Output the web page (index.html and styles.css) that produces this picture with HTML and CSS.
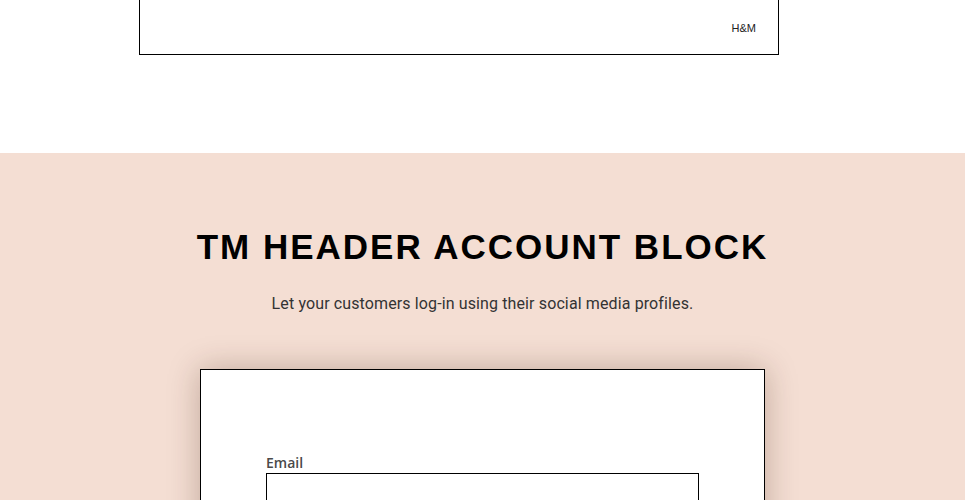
FILE: index.html
```html
<!DOCTYPE html>
<html lang="en">
<head>
<meta charset="utf-8">
<title>TM Header Account Block</title>
<link rel="stylesheet" href="styles.css">
</head>
<body>
  <div class="brand-box">
    <span class="brand">H&amp;M</span>
  </div>
  <section class="account-section">
    <h1 class="section-title">TM HEADER ACCOUNT BLOCK</h1>
    <p class="section-sub">Let your customers log-in using their social media profiles.</p>
    <div class="login-card">
      <label class="field-label" for="email">Email</label>
      <input class="field-input" id="email" type="email">
    </div>
  </section>
</body>
</html>
```
FILE: styles.css
```css
html, body {
  margin: 0;
  padding: 0;
  background: #ffffff;
}

body {
  font-family: "Liberation Sans", Arial, sans-serif;
  overflow: hidden;
}

.brand-box {
  box-sizing: border-box;
  width: 640px;
  height: 55px;
  margin-left: 139px;
  margin-bottom: 98px;
  border: 1px solid #000;
  border-top: 0;
  display: flex;
  justify-content: flex-end;
  align-items: flex-start;
  padding: 21px 22px 0 0;
}

.brand {
  font-family: "Liberation Sans", Arial, sans-serif;
  font-size: 11px;
  line-height: 14px;
  color: #222;
}

.account-section {
  background: #f4ded3;
  padding-top: 74px;
  min-height: 400px;
  display: flex;
  flex-direction: column;
  align-items: center;
}

.section-title {
  margin: 0;
  font-family: "Liberation Sans", Arial, sans-serif;
  font-weight: 700;
  font-size: 35px;
  line-height: 40px;
  letter-spacing: 2px;
  color: #000;
  text-align: center;
}

.section-sub {
  margin: 25px 0 0;
  font-family: Roboto, "Liberation Sans", sans-serif;
  font-size: 16px;
  line-height: 24px;
  letter-spacing: 0.12px;
  color: #333;
  text-align: center;
}

.login-card {
  box-sizing: border-box;
  width: 565px;
  margin-top: 53px;
  background: #fff;
  border: 1px solid #000;
  box-shadow: 0 0 30px rgba(60, 30, 10, 0.28);
  padding: 84px 65px 40px;
  display: flex;
  flex-direction: column;
}

.field-label {
  font-family: "Open Sans", sans-serif;
  font-weight: 600;
  font-size: 14px;
  line-height: 18px;
  color: #4a4a4a;
  margin-bottom: 1px;
}

.field-input {
  box-sizing: border-box;
  width: 100%;
  height: 42px;
  border: 1px solid #000;
  border-radius: 0;
  background: #fff;
  margin: 0;
}
```
